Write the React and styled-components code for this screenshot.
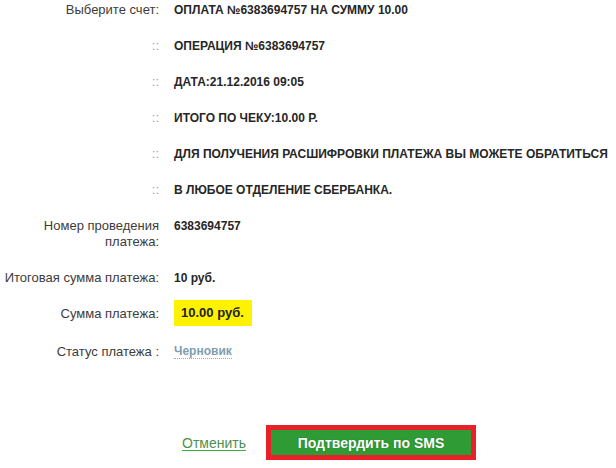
import React from "react";
import styled, { createGlobalStyle } from "styled-components";

const Global = createGlobalStyle`
  html, body { margin: 0; padding: 0; background: #fff; }
  body { font-family: "Liberation Sans", Arial, sans-serif; }
`;

const Page = styled.div`
  width: 616px;
  height: 468px;
  overflow: hidden;
  box-sizing: border-box;
  padding-top: 2px;
  display: flex;
  flex-direction: column;
`;

const Form = styled.div`
  display: flex;
  flex-direction: column;
  gap: 20px;
`;

const Row = styled.div`
  display: flex;
  align-items: ${(p) => (p.$center ? "center" : "flex-start")};
`;

const Label = styled.div`
  width: 159px;
  flex: none;
  text-align: right;
  font-size: 13px;
  line-height: 16px;
  color: ${(p) => (p.$sep ? "#a0a0a0" : "#3c3c3c")};
`;

const Value = styled.div`
  margin-left: 15px;
  font-size: 12px;
  line-height: 16px;
  font-weight: bold;
  color: #262626;
  white-space: nowrap;
  display: flex;
`;

const Amount = styled.div`
  background: #fff200;
  padding: 5px 8px 5px 7px;
  margin: -6px 0 -2px;
  font-size: 13px;
  line-height: 16px;
  font-weight: bold;
  color: #222;
`;

const Status = styled.span`
  color: #7f9ead;
  font-weight: bold;
  border-bottom: 1px dotted #8fb0bf;
  line-height: 14px;
`;

const Actions = styled.div`
  margin-top: 65px;
  padding-left: 182px;
  display: flex;
  align-items: center;
  gap: 20px;
`;

const CancelLink = styled.a`
  font-size: 14px;
  color: #4f8f4f;
  text-decoration: underline;
  text-decoration-color: #38b038;
  text-underline-offset: 2px;
  cursor: pointer;
`;

const ButtonFrame = styled.div`
  border: 5px solid #e8202a;
  display: flex;
`;

const Confirm = styled.button`
  width: 200px;
  height: 25px;
  border: none;
  margin: 0;
  padding: 0;
  background: #2e9b35;
  color: #fff;
  font-family: "Liberation Sans", Arial, sans-serif;
  font-size: 14px;
  font-weight: bold;
  text-shadow: 0 0 1px rgba(0, 0, 0, 0.35);
  cursor: pointer;
`;

const lines = [
  "ОПЕРАЦИЯ №6383694757",
  "ДАТА:21.12.2016 09:05",
  "ИТОГО ПО ЧЕКУ:10.00 Р.",
  "ДЛЯ ПОЛУЧЕНИЯ РАСШИФРОВКИ ПЛАТЕЖА ВЫ МОЖЕТЕ ОБРАТИТЬСЯ",
  "В ЛЮБОЕ ОТДЕЛЕНИЕ СБЕРБАНКА.",
];

export default function App() {
  return (
    <>
      <Global />
      <Page>
        <Form>
          <Row>
            <Label>Выберите счет:</Label>
            <Value>ОПЛАТА №6383694757 НА СУММУ 10.00</Value>
          </Row>
          {lines.map((l) => (
            <Row key={l}>
              <Label $sep>::</Label>
              <Value>{l}</Value>
            </Row>
          ))}
          <Row>
            <Label>Номер проведения платежа:</Label>
            <Value>6383694757</Value>
          </Row>
          <Row>
            <Label>Итоговая сумма платежа:</Label>
            <Value>10 руб.</Value>
          </Row>
          <Row>
            <Label>Сумма платежа:</Label>
            <Value>
              <Amount>10.00 руб.</Amount>
            </Value>
          </Row>
          <Row>
            <Label>Статус платежа :</Label>
            <Value>
              <Status>Черновик</Status>
            </Value>
          </Row>
        </Form>
        <Actions>
          <CancelLink>Отменить</CancelLink>
          <ButtonFrame>
            <Confirm>Подтвердить по SMS</Confirm>
          </ButtonFrame>
        </Actions>
      </Page>
    </>
  );
}
